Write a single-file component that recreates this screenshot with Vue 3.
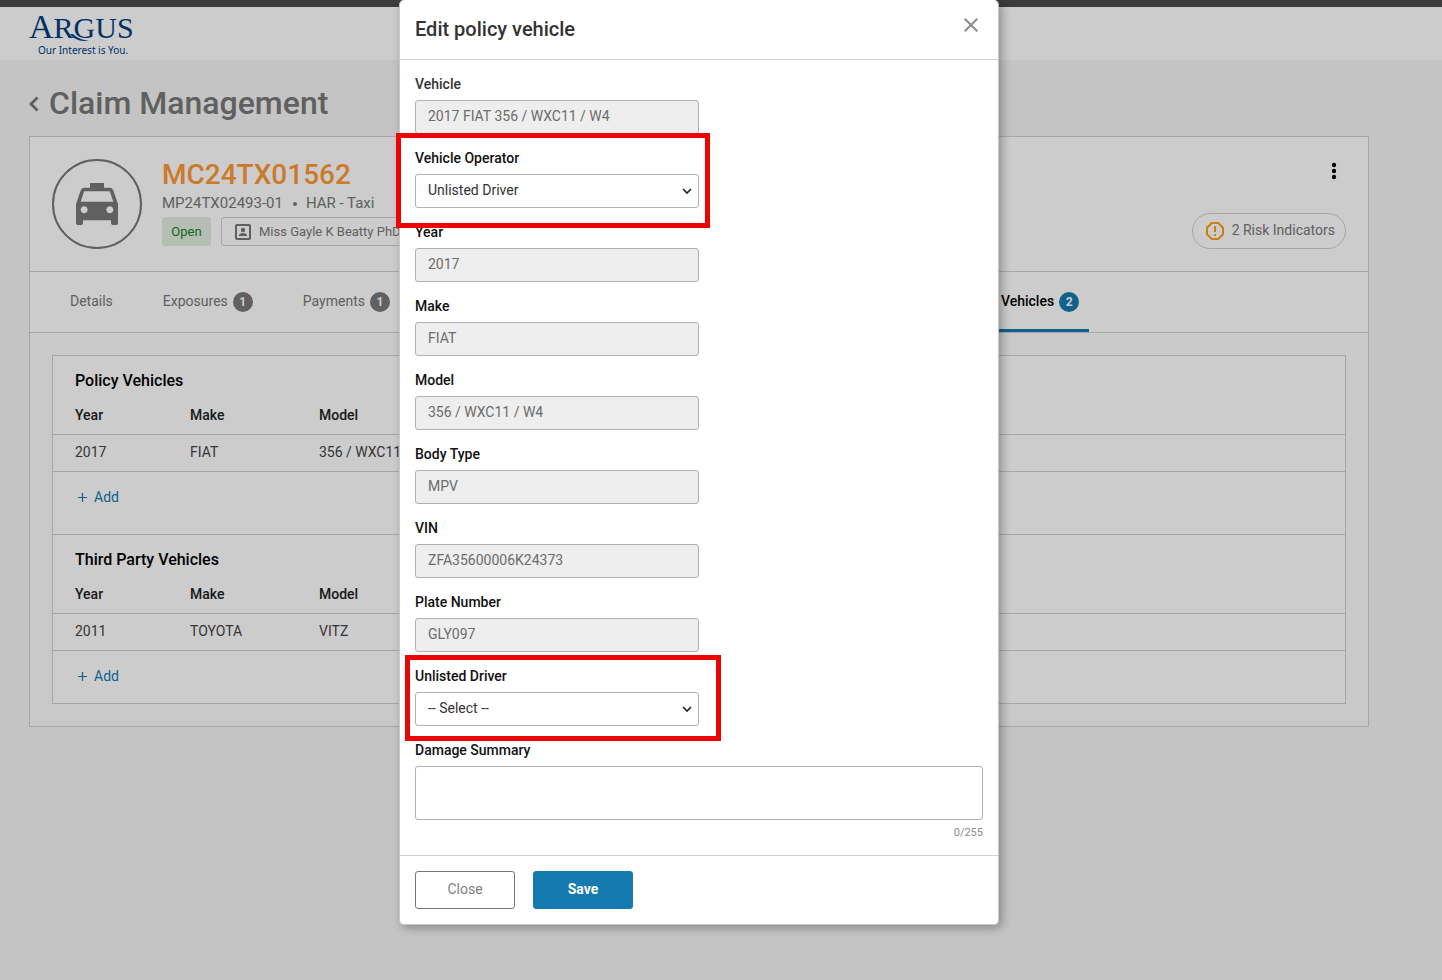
<script setup>
import { ref } from 'vue'

const sections = [
  { title: 'Policy Vehicles', rows: [{ year: '2017', make: 'FIAT', model: '356 / WXC11 / W4' }] },
  { title: 'Third Party Vehicles', rows: [{ year: '2011', make: 'TOYOTA', model: 'VITZ' }] },
]

const tabs = [
  { label: 'Details' },
  { label: 'Exposures', count: 1 },
  { label: 'Payments', count: 1 },
  { label: 'Vehicles', count: 2, active: true },
]

const fields = [
  { id: 'vehicle', label: 'Vehicle', value: '2017 FIAT 356 / WXC11 / W4', soft: true },
  { id: 'operator', label: 'Vehicle Operator', options: ['Unlisted Driver'], mark: 'mark-operator' },
  { id: 'year', label: 'Year', value: '2017' },
  { id: 'make', label: 'Make', value: 'FIAT' },
  { id: 'model', label: 'Model', value: '356 / WXC11 / W4' },
  { id: 'body', label: 'Body Type', value: 'MPV' },
  { id: 'vin', label: 'VIN', value: 'ZFA35600006K24373' },
  { id: 'plate', label: 'Plate Number', value: 'GLY097' },
  { id: 'unlisted', label: 'Unlisted Driver', options: ['-- Select --'], mark: 'mark-unlisted' },
]

const summary = ref('')
</script>

<template>
  <div class="page">
    <div class="topbar"></div>
    <header class="brand-bar">
      <div class="logo">
        <div class="wordmark"><span class="big">A</span>RGUS</div>
        <svg class="swash" viewBox="0 0 20 8" aria-hidden="true">
          <path d="M0 0 C4 5 10 8 19 6.500 C13 6.300 7 4 3 0 Z" />
        </svg>
        <div class="tagline">Our Interest is You.</div>
      </div>
    </header>

    <main class="content">
      <div class="title-row">
        <button class="back" aria-label="Back">
          <svg width="10" height="16" viewBox="0 0 10 16"><path d="M8.500 1.500 2 8l6.500 6.500" fill="none" stroke="currentColor" stroke-width="2.800" /></svg>
        </button>
        <h1>Claim Management</h1>
      </div>

      <section class="card">
        <div class="claim">
          <div class="avatar">
            <svg width="56" height="56" viewBox="0 0 24 24" fill="currentColor"><path d="M18.920 6.010C18.720 5.420 18.160 5 17.500 5H15V3H9v2H6.500c-.66 0-1.210.42-1.420 1.010L3 12v8c0 .55.45 1 1 1h1c.55 0 1-.45 1-1v-1h12v1c0 .55.45 1 1 1h1c.55 0 1-.45 1-1v-8l-2.080-5.990zM6.500 16c-.83 0-1.500-.67-1.500-1.500S5.670 13 6.500 13s1.500.67 1.500 1.500S7.330 16 6.500 16zm11 0c-.83 0-1.500-.67-1.500-1.500s.67-1.500 1.500-1.500 1.500.67 1.500 1.500-.67 1.500-1.500 1.500zM5 11l1.500-4.500h11L19 11H5z" /></svg>
          </div>
          <div class="claim-text">
            <h2>MC24TX01562</h2>
            <div class="policy"><span>MP24TX02493-01</span><i class="dot"></i><span>HAR - Taxi</span></div>
            <div class="chips">
              <span class="status">Open</span>
              <button class="person">
                <svg width="16" height="16" viewBox="0 0 16 16"><rect x="1" y="1" width="14" height="14" rx="1" fill="none" stroke="currentColor" stroke-width="2" /><circle cx="8" cy="6" r="2.200" fill="currentColor" /><path d="M4 12v-.8c0-1.500 2.600-2.200 4-2.200s4 .7 4 2.200v.8z" fill="currentColor" /></svg>
                Miss Gayle K Beatty PhD
              </button>
            </div>
          </div>
          <div class="claim-side">
            <button class="more" aria-label="More actions">
              <svg width="6" height="18" viewBox="0 0 6 18"><circle cx="3" cy="3" r="2.200" /><circle cx="3" cy="9" r="2.200" /><circle cx="3" cy="15" r="2.200" /></svg>
            </button>
            <button class="risk">
              <svg width="18" height="18" viewBox="0 0 18 18"><path d="M5.700 1h6.600L17 5.700v6.600L12.300 17H5.700L1 12.300V5.700z" fill="none" stroke="currentColor" stroke-width="2" /><path d="M8 4h2v6H8zM8 12h2v2H8z" fill="currentColor" /></svg>
              <span class="risk-label">2 Risk Indicators</span>
            </button>
          </div>
        </div>

        <nav class="tabs">
          <a v-for="t in tabs" :key="t.label" href="#" class="tab" :class="{ active: t.active }">
            <span class="tab-label">{{ t.label }}</span><span v-if="t.count" class="count">{{ t.count }}</span>
          </a>
        </nav>

        <div class="panel">
          <div class="lists">
            <section v-for="s in sections" :key="s.title" class="list">
              <h3>{{ s.title }}</h3>
              <table>
                <thead>
                  <tr><th class="c-year">Year</th><th class="c-make">Make</th><th>Model</th></tr>
                </thead>
                <tbody>
                  <tr v-for="r in s.rows" :key="r.model"><td>{{ r.year }}</td><td>{{ r.make }}</td><td>{{ r.model }}</td></tr>
                </tbody>
              </table>
              <button class="add">
                <svg width="9" height="9" viewBox="0 0 9 9"><path d="M0 4.500h9M4.500 0v9" stroke="currentColor" stroke-width="1.200" /></svg>
                Add
              </button>
            </section>
          </div>
        </div>
      </section>
    </main>

    <div class="backdrop">
      <form class="modal" role="dialog" aria-labelledby="modal-title" @submit.prevent>
        <div class="modal-head">
          <h2 id="modal-title">Edit policy vehicle</h2>
          <button type="button" class="x" aria-label="Dismiss">
            <svg width="14" height="14" viewBox="0 0 14 14"><path d="M.7.7l12.600 12.600M13.300.7.7 13.300" stroke="currentColor" stroke-width="2" /></svg>
          </button>
        </div>
        <div class="modal-body">
          <div v-for="f in fields" :key="f.id" class="field">
            <label :for="f.id" :class="{ soft: f.soft }">{{ f.label }}</label>
            <div v-if="f.options" class="select">
              <select :id="f.id"><option v-for="o in f.options" :key="o">{{ o }}</option></select>
              <svg width="10" height="7" viewBox="0 0 10 7"><path d="M1 1l4 4 4-4" fill="none" stroke="#222" stroke-width="1.700" /></svg>
            </div>
            <input v-else :id="f.id" type="text" :value="f.value" disabled />
            <div v-if="f.mark" class="mark" :class="f.mark"></div>
          </div>
          <div class="field wide">
            <label for="summary">Damage Summary</label>
            <textarea id="summary" v-model="summary" maxlength="255"></textarea>
            <div class="counter">{{ summary.length }}/255</div>
          </div>
        </div>
        <div class="modal-foot">
          <button type="button" class="btn">Close</button>
          <button type="submit" class="btn primary">Save</button>
        </div>
      </form>
    </div>
  </div>
</template>

<style>
body {
  background: #f5f5f5;
}
</style>

<style scoped>
.page, .page * {
  box-sizing: border-box;
}
.page {
  position: relative;
  min-height: 100vh;
  background: #f5f5f5;
  font: 14px/16px Roboto, sans-serif;
  color: #787878;
  overflow: hidden;
}
button {
  font: inherit;
  color: inherit;
  background: none;
  border: 0;
  padding: 0;
  cursor: pointer;
}
svg {
  display: block;
  flex: none;
}
h1, h2, h3 {
  margin: 0;
  font-weight: 500;
}
.topbar {
  height: 7px;
  background: #4c4c4c;
}
.brand-bar {
  height: 53px;
  padding: 4px 29px 0;
  background: #fff;
}
.logo {
  position: relative;
  width: 108px;
  color: #003d80;
}
.wordmark {
  font: 30px/32px "Liberation Serif", serif;
  white-space: nowrap;
}
.wordmark .big {
  font-size: 34px;
}
.swash {
  position: absolute;
  left: 41px;
  top: 23px;
  width: 20px;
  height: 8px;
  fill: currentColor;
  overflow: visible;
}
.tagline {
  padding-left: 9px;
  font: 10px/12px "Noto Sans", sans-serif;
  white-space: nowrap;
}
.content {
  padding: 0 73px 0 29px;
}
.title-row {
  display: flex;
  align-items: center;
  gap: 10px;
  height: 76px;
  padding-top: 10px;
}
.back {
  padding-top: 2px;
}
.title-row h1 {
  font-size: 32px;
  line-height: 40px;
}
.card {
  border: 1px solid #d0d0d0;
  background: #fff;
}
.claim {
  display: flex;
  height: 134px;
  padding: 22px;
}
.avatar {
  display: grid;
  place-items: center;
  width: 90px;
  height: 90px;
  margin-right: 20px;
  border: 2px solid #787878;
  border-radius: 50%;
}
.claim-text h2 {
  font-size: 28px;
  line-height: 32px;
  color: #ff9935;
}
.policy {
  display: flex;
  align-items: center;
  height: 26px;
  padding-bottom: 2px;
  font-size: 15px;
}
.dot {
  width: 4px;
  height: 4px;
  margin: 2px 9px 0 10px;
  border-radius: 50%;
  background: #787878;
}
.chips {
  display: flex;
  gap: 10px;
  font-size: 13px;
}
.status {
  width: 49px;
  height: 29px;
  line-height: 29px;
  text-align: center;
  border-radius: 3px;
  background: #e2eee0;
  color: #12801c;
}
.person {
  display: flex;
  align-items: center;
  gap: 8px;
  height: 29px;
  padding: 0 13px;
  border: 1px solid #d0d0d0;
  border-radius: 3px;
  white-space: nowrap;
}
.claim-side {
  display: flex;
  flex-direction: column;
  align-items: flex-end;
  justify-content: space-between;
  margin-left: auto;
}
.more {
  padding: 3px 9px;
  fill: #000;
}
.risk {
  display: flex;
  align-items: center;
  gap: 8px;
  height: 36px;
  padding: 0 10px 0 13px;
  border: 1px solid #d0d0d0;
  border-radius: 18px;
}
.risk svg {
  color: #ff9f10;
}
.risk-label, .tab-label {
  padding-bottom: 2px;
}
.tabs {
  display: flex;
  height: 62px;
  border: solid #d0d0d0;
  border-width: 1px 0;
}
.tab {
  display: flex;
  align-items: center;
  margin-left: 30px;
  padding: 0 10px;
  color: inherit;
  text-decoration: none;
}
.tab.active {
  margin-left: 591px;
  color: #000;
  font-weight: 500;
  border-bottom: 3px solid #147ab0;
  padding-top: 3px;
}
.count {
  width: 20px;
  height: 20px;
  margin-left: 5px;
  border-radius: 50%;
  background: #787878;
  color: #fff;
  font-size: 12px;
  font-weight: 700;
  line-height: 20px;
  text-align: center;
}
.active .count {
  background: #147ab0;
}
.panel {
  padding: 22px;
  background: #fcfcfc;
}
.lists {
  border: 1px solid #d0d0d0;
  background: #fff;
}
.list + .list {
  border-top: 1px solid #d0d0d0;
}
.list h3 {
  padding: 15px 22px 4px;
  font-size: 16px;
  line-height: 20px;
  color: #000;
}
table {
  width: 100%;
  border-collapse: separate;
  border-spacing: 0;
  color: #444;
}
th, td {
  height: 37px;
  padding: 0 22px 2px;
  border-bottom: 1px solid #d0d0d0;
  text-align: left;
}
th {
  height: 40px;
  padding-bottom: 0;
  font-weight: 500;
  color: #222;
}
.c-year {
  width: 115px;
}
.c-make {
  width: 129px;
}
.add {
  display: flex;
  align-items: center;
  gap: 7px;
  height: 62px;
  padding: 0 25px 12px;
  color: #147ab0;
}
.list:last-child .add {
  height: 52px;
  padding-bottom: 2px;
}
.backdrop {
  position: absolute;
  inset: 0;
  padding: 0 73px 0 29px;
  background: rgba(0, 0, 0, 0.2);
}
.modal {
  width: 600px;
  max-width: 100%;
  margin: 0 auto;
  border: 1px solid #c8c8c8;
  border-top: 0;
  border-radius: 5px;
  background: #fff;
  box-shadow: 3px 3px 10px rgba(0, 0, 0, 0.3);
}
.modal-head {
  display: flex;
  justify-content: space-between;
  align-items: center;
  height: 60px;
  padding: 0 20px 2px 15px;
  border-bottom: 1px solid #d0d0d0;
}
.modal-head h2 {
  font-size: 20px;
  line-height: 24px;
  color: #333;
}
.x {
  margin-bottom: 7px;
  color: #8c8c8c;
}
.modal-body {
  display: grid;
  gap: 16px;
  padding: 16px 15px 14px;
}
.field {
  position: relative;
  width: 284px;
}
.field.wide {
  width: auto;
}
label {
  display: block;
  margin-bottom: 8px;
  font-weight: 500;
  color: #111;
}
label.soft {
  color: #333;
}
input, select, textarea {
  display: block;
  width: 100%;
  height: 34px;
  margin: 0;
  padding: 0 12px 2px;
  border: 1px solid #b0b0b0;
  border-radius: 3px;
  outline: 0;
  background: #fff;
  color: #333;
  font: inherit;
}
input:disabled {
  background: #eee;
  color: #6c6c6c;
}
select {
  appearance: none;
}
.select {
  position: relative;
}
.select svg {
  position: absolute;
  right: 7px;
  top: 14px;
  pointer-events: none;
}
textarea {
  height: 54px;
  resize: none;
}
.counter {
  margin-top: 5px;
  font-size: 11px;
  text-align: right;
  color: #8c8c8c;
}
.mark {
  position: absolute;
  z-index: 1;
  border: 5px solid #eb0505;
  pointer-events: none;
}
.mark-operator {
  inset: -17px -11px -20px -19px;
}
.mark-unlisted {
  inset: -13px -22px -15px -10px;
}
.modal-foot {
  display: flex;
  gap: 18px;
  padding: 15px;
  border-top: 1px solid #d0d0d0;
}
.btn {
  width: 100px;
  height: 38px;
  padding-bottom: 2px;
  border: 1px solid #777;
  border-radius: 3px;
  color: #808080;
}
.btn.primary {
  border-color: #147ab0;
  background: #147ab0;
  color: #fff;
  font-weight: 700;
}
</style>
